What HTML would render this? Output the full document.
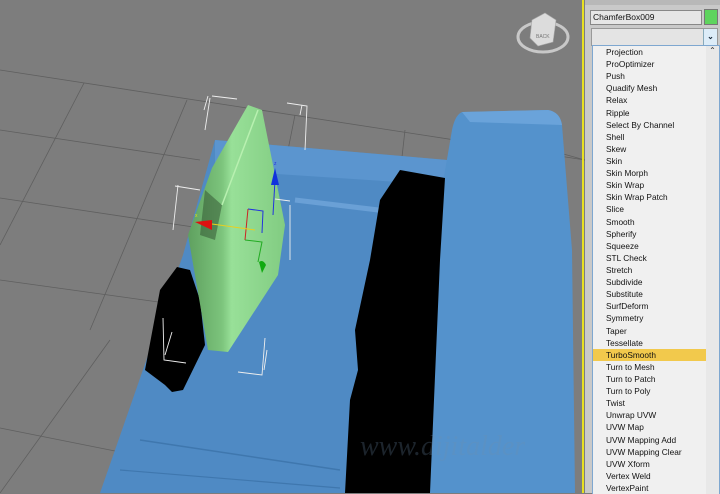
<!DOCTYPE html>
<html><head><style>
body{margin:0;width:720px;height:493px;overflow:hidden;background:#7c7c7c;font-family:"Liberation Sans",sans-serif;position:relative}
#vp{position:absolute;left:0;top:0}
#panel{position:absolute;left:585px;top:0;width:135px;height:493px;background:#c9c9c9}
#yl{position:absolute;left:582px;top:0;width:2px;height:493px;background:#e8e020}
.name{position:absolute;left:590px;top:10px;width:108px;height:13px;background:#e6e6e6;border:1px solid #888;font-size:8.5px;line-height:13px;padding-left:2px;color:#111}
.sw{position:absolute;left:704px;top:9px;width:12px;height:14px;background:#5ed45e;border:1px solid #777}
.dd{position:absolute;left:591px;top:28px;width:125px;height:16px;background:#e4e4e4;border:1px solid #999}
.dd b{position:absolute;right:0;top:0;width:13px;height:16px;background:#dcecf8;border-left:1px solid #8ab;font-size:8px;text-align:center;line-height:16px;color:#123}
.list{position:absolute;left:592px;top:45px;width:126px;height:448px;background:#f0f0f0;border:1px solid #7ea7d0;border-bottom:none}
.sb{position:absolute;right:0;top:0;width:13px;height:448px;background:#e8e8e8}
.it{height:12.11px;font-size:8.3px;line-height:12px;padding-left:13px;color:#111;white-space:nowrap;width:100px}
.sel{background:#f2c94c}
</style></head><body>
<svg id="vp" width="585" height="493">
<defs>
<linearGradient id="pg" x1="0" y1="0" x2="1" y2="0">
<stop offset="0" stop-color="#5fa05f"/><stop offset="0.35" stop-color="#7cc47c"/><stop offset="0.45" stop-color="#98e098"/><stop offset="1" stop-color="#82cc82"/>
</linearGradient>
</defs>
<rect width="585" height="493" fill="#7d7d7d"/>
<g stroke="#5f5f5f" stroke-width="0.8" fill="none">
<line x1="0" y1="70" x2="585" y2="160"/>
<line x1="0" y1="130" x2="200" y2="160"/>
<line x1="0" y1="198" x2="200" y2="228"/>
<line x1="0" y1="280" x2="180" y2="305"/>
<line x1="0" y1="428" x2="120" y2="452"/>
<line x1="470" y1="128" x2="585" y2="160"/>
<line x1="84" y1="83" x2="0" y2="245"/>
<line x1="187" y1="100" x2="90" y2="330"/>
<line x1="110" y1="340" x2="0" y2="493"/>
<line x1="295" y1="115" x2="285" y2="165"/>
<line x1="405" y1="130" x2="400" y2="175"/>
</g>
<ellipse cx="543" cy="37" rx="25" ry="15" fill="none" stroke="#c8c8c8" stroke-width="3"/>
<polygon points="532,20 545,13 556,20 553,42 538,46 530,38" fill="#dcdcdc" stroke="#aaa" stroke-width="0.6"/>
<text x="536" y="38" font-size="5" fill="#777" font-family="Liberation Sans">BACK</text>
<polygon points="183,255 215,140 447,160 447,493 100,493" fill="#4f8ac4"/>
<polygon points="215,140 447,160 445,185 215,170" fill="#5b95cf"/>
<line x1="295" y1="200" x2="420" y2="215" stroke="#6aa0d6" stroke-width="5"/>
<line x1="140" y1="440" x2="340" y2="470" stroke="#3f77ae" stroke-width="1.5"/>
<line x1="120" y1="470" x2="340" y2="488" stroke="#3f77ae" stroke-width="1.2"/>
<path d="M462,112 Q455,115 452,130 L440,200 L430,493 L575,493 L572,250 L568,200 L562,125 Q560,112 548,110 Z" fill="#5492cc"/>
<path d="M462,112 L548,110 Q560,112 562,125 L470,122 Z" fill="#6aa3da"/>
<polygon points="400,170 445,178 440,260 430,493 345,493 350,400 358,370 355,330 370,260 380,200" fill="#000"/>
<polygon points="177,267 160,290 145,370 165,385 172,392 183,390 205,345 200,300 190,270" fill="#000"/>
<polygon points="248,105 262,110 285,225 278,275 228,352 208,350 188,235 212,168" fill="url(#pg)"/>
<polygon points="205,190 222,205 215,240 200,235" fill="#2d4d2d" opacity="0.5"/>
<line x1="258" y1="110" x2="222" y2="205" stroke="#b8f0b0" stroke-width="1.5"/>
<g fill="none" stroke-width="1">
<path d="M248,209 L263,211 L262,233" stroke="#2233dd"/>
<path d="M248,209 L245,240" stroke="#cc2222"/>
<path d="M245,240 L262,242 L258,262" stroke="#22aa22"/>
<line x1="212" y1="224" x2="255" y2="230" stroke="#e8d020"/>
<line x1="275" y1="180" x2="273" y2="215" stroke="#2233dd"/>
</g>
<polygon points="195,222 212,220 212,230" fill="#dd1111"/>
<polygon points="271,185 279,185 275,168" fill="#1133dd"/>
<path d="M259,262 q4,-3 7,3 l-4,8 z" fill="#11aa11"/>
<text x="274" y="165" font-size="5" fill="#2233dd">z</text>
<text x="195" y="217" font-size="5" fill="#dddd22">x</text>
<g stroke="#eee" stroke-width="0.9" fill="none">
<path d="M210,98 L205,130 M212,96 L237,99 M204,110 L208,96"/>
<path d="M287,103 L307,106 L305,150 M300,115 L302,105"/>
<path d="M178,185 L173,230 M175,186 L200,190"/>
<path d="M290,205 L290,260 M275,199 L290,201"/>
<path d="M163,318 L164,360 L186,363 M165,355 L172,332"/>
<path d="M265,338 L262,375 L238,372 M267,350 L264,370"/>
</g>
<text x="360" y="455" font-size="28" font-style="italic" fill="#6f8fae" opacity="0.25" font-family="Liberation Serif">www.dijitalder</text>
</svg>
<div id="yl"></div>
<div id="panel"></div>
<div style="position:absolute;left:585px;top:0;width:135px;height:5px;background:#b8b8b8"></div>
<div class="name">ChamferBox009</div>
<div class="sw"></div>
<div class="dd"><b>&#8964;</b></div>
<div class="list">
<div class="sb"><div style="font-size:8px;text-align:center;color:#333">&#8963;</div></div>
<div class="it">Projection</div><div class="it">ProOptimizer</div><div class="it">Push</div><div class="it">Quadify Mesh</div><div class="it">Relax</div><div class="it">Ripple</div><div class="it">Select By Channel</div><div class="it">Shell</div><div class="it">Skew</div><div class="it">Skin</div><div class="it">Skin Morph</div><div class="it">Skin Wrap</div><div class="it">Skin Wrap Patch</div><div class="it">Slice</div><div class="it">Smooth</div><div class="it">Spherify</div><div class="it">Squeeze</div><div class="it">STL Check</div><div class="it">Stretch</div><div class="it">Subdivide</div><div class="it">Substitute</div><div class="it">SurfDeform</div><div class="it">Symmetry</div><div class="it">Taper</div><div class="it">Tessellate</div><div class="it sel" style="width:100px">TurboSmooth</div><div class="it">Turn to Mesh</div><div class="it">Turn to Patch</div><div class="it">Turn to Poly</div><div class="it">Twist</div><div class="it">Unwrap UVW</div><div class="it">UVW Map</div><div class="it">UVW Mapping Add</div><div class="it">UVW Mapping Clear</div><div class="it">UVW Xform</div><div class="it">Vertex Weld</div><div class="it">VertexPaint</div>
</div>
</body></html>
